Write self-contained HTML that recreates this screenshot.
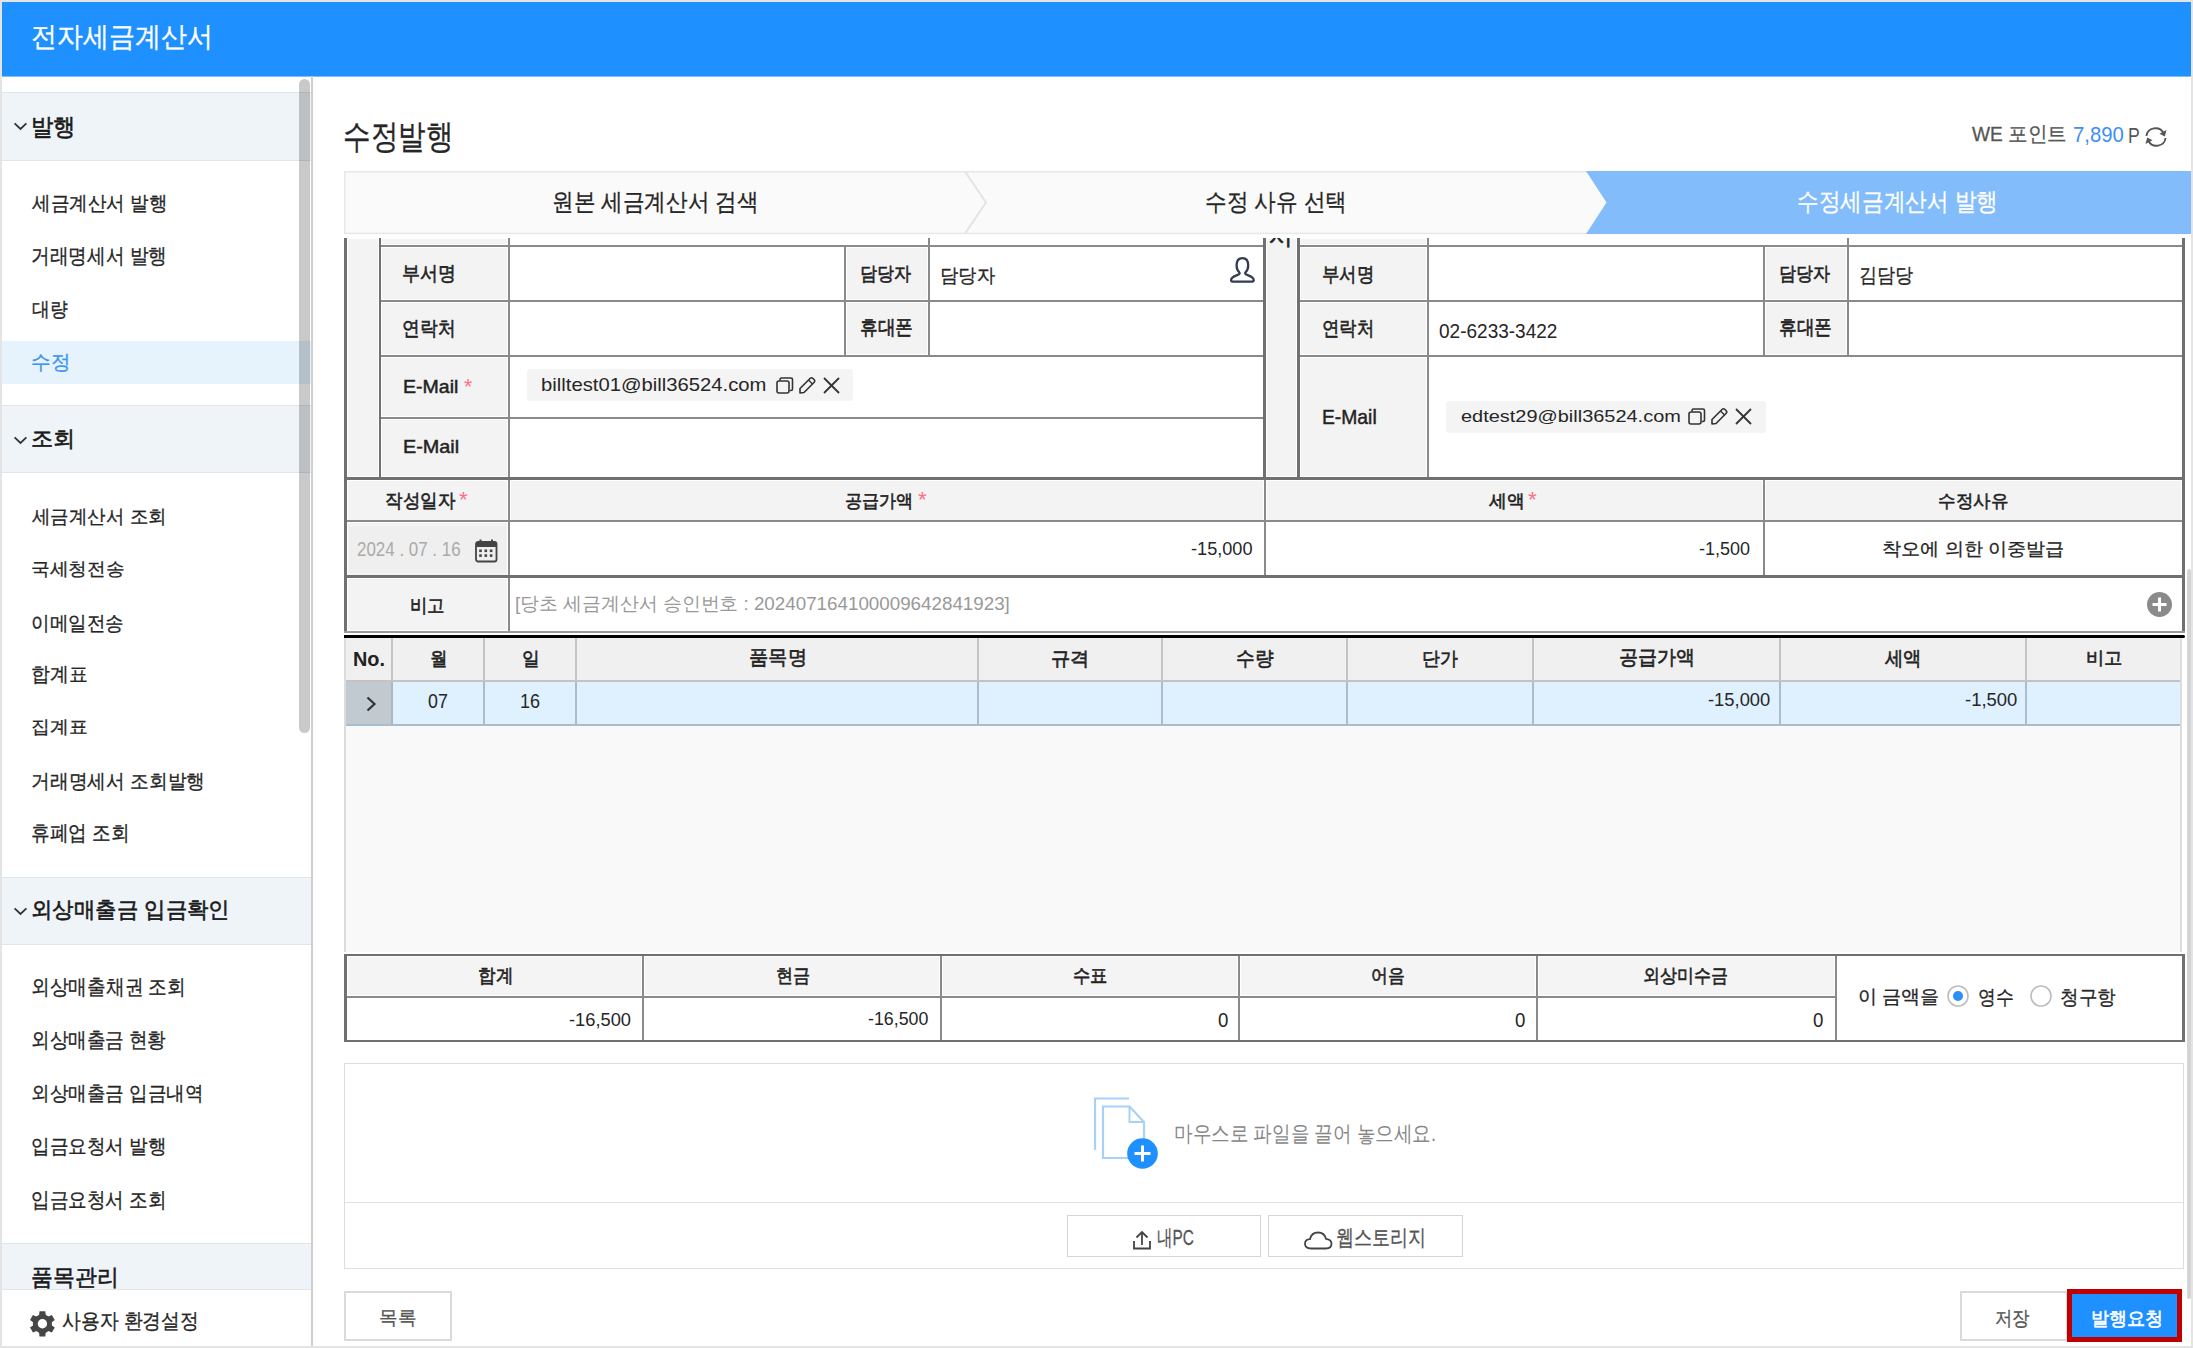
<!DOCTYPE html>
<html><head><meta charset="utf-8"><title>수정발행</title>
<style>
html,body{margin:0;padding:0;width:2193px;height:1348px;overflow:hidden;background:#fff}
body{position:relative;font-family:'Liberation Sans',sans-serif}
body>div,body>svg{position:absolute;display:block}
.t{white-space:pre;transform-origin:0 0}
</style></head><body>
<div style="left:0px;top:0px;width:2193px;height:1348px;background:#e4e4e4;"></div>
<div style="left:2px;top:2px;width:2189px;height:1344px;background:#ffffff;"></div>
<div style="left:2px;top:2px;width:2189px;height:74px;background:#1e90ff;"></div>
<div style="left:2px;top:76px;width:2189px;height:1px;background:#7dbdff;"></div>
<div style="left:2px;top:92px;width:309px;height:69px;background:#e1e5e9;"></div>
<div style="left:2px;top:93px;width:309px;height:67px;background:#eff4f8;"></div>
<div style="left:2px;top:405px;width:309px;height:68px;background:#e1e5e9;"></div>
<div style="left:2px;top:406px;width:309px;height:66px;background:#eff4f8;"></div>
<div style="left:2px;top:877px;width:309px;height:68px;background:#e1e5e9;"></div>
<div style="left:2px;top:878px;width:309px;height:66px;background:#eff4f8;"></div>
<div style="left:2px;top:1243px;width:309px;height:47px;background:#e1e5e9;"></div>
<div style="left:2px;top:1244px;width:309px;height:45px;background:#eff4f8;"></div>
<div style="left:2px;top:341px;width:309px;height:43px;background:#e6f3fd;"></div>
<div style="left:2px;top:1289px;width:309px;height:1px;background:#e4e4e4;"></div>
<div style="left:2px;top:1290px;width:309px;height:56px;background:#ffffff;"></div>
<div style="left:299px;top:79px;width:11px;height:654px;background:rgba(0,0,0,0.21);border-radius:6px"></div>
<div style="left:311px;top:76px;width:2px;height:1270px;background:#cfcfcf;"></div>
<svg style="left:343px;top:170px" width="1850" height="66" viewBox="343 170 1850 66"><rect x="344" y="171" width="1847" height="63" fill="#fafafa"/><rect x="344" y="171" width="1847" height="1.6" fill="#e8e8e8"/><rect x="344" y="232.6" width="1847" height="1.6" fill="#e8e8e8"/><rect x="344" y="171" width="1.5" height="63" fill="#e8e8e8"/><polyline points="965,171.5 986,202.5 965,233.5" fill="none" stroke="#e4e4e4" stroke-width="2"/><polygon points="1586,171 2191,171 2191,234 1586,234 1606.5,202.5" fill="#82bcfb"/></svg>
<div style="left:347px;top:238px;width:32px;height:239px;background:#ffffff;"></div>
<div style="left:348px;top:239px;width:30px;height:237px;background:#f3f3f3;"></div>
<div style="left:381px;top:238px;width:127px;height:7px;background:#ffffff;"></div>
<div style="left:382px;top:239px;width:125px;height:5px;background:#f3f3f3;"></div>
<div style="left:381px;top:247px;width:127px;height:53px;background:#ffffff;"></div>
<div style="left:382px;top:248px;width:125px;height:51px;background:#f3f3f3;"></div>
<div style="left:381px;top:302px;width:127px;height:53px;background:#ffffff;"></div>
<div style="left:382px;top:303px;width:125px;height:51px;background:#f3f3f3;"></div>
<div style="left:381px;top:357px;width:127px;height:60px;background:#ffffff;"></div>
<div style="left:382px;top:358px;width:125px;height:58px;background:#f3f3f3;"></div>
<div style="left:381px;top:419px;width:127px;height:58px;background:#ffffff;"></div>
<div style="left:382px;top:420px;width:125px;height:56px;background:#f3f3f3;"></div>
<div style="left:846px;top:247px;width:82px;height:53px;background:#ffffff;"></div>
<div style="left:847px;top:248px;width:80px;height:51px;background:#f3f3f3;"></div>
<div style="left:1765px;top:247px;width:82px;height:53px;background:#ffffff;"></div>
<div style="left:1766px;top:248px;width:80px;height:51px;background:#f3f3f3;"></div>
<div style="left:846px;top:302px;width:82px;height:53px;background:#ffffff;"></div>
<div style="left:847px;top:303px;width:80px;height:51px;background:#f3f3f3;"></div>
<div style="left:1765px;top:302px;width:82px;height:53px;background:#ffffff;"></div>
<div style="left:1766px;top:303px;width:80px;height:51px;background:#f3f3f3;"></div>
<div style="left:1266px;top:238px;width:31px;height:239px;background:#ffffff;"></div>
<div style="left:1267px;top:239px;width:29px;height:237px;background:#f3f3f3;"></div>
<div style="left:1300px;top:238px;width:127px;height:7px;background:#ffffff;"></div>
<div style="left:1301px;top:239px;width:125px;height:5px;background:#f3f3f3;"></div>
<div style="left:1300px;top:247px;width:127px;height:53px;background:#ffffff;"></div>
<div style="left:1301px;top:248px;width:125px;height:51px;background:#f3f3f3;"></div>
<div style="left:1300px;top:302px;width:127px;height:53px;background:#ffffff;"></div>
<div style="left:1301px;top:303px;width:125px;height:51px;background:#f3f3f3;"></div>
<div style="left:1300px;top:357px;width:127px;height:120px;background:#ffffff;"></div>
<div style="left:1301px;top:358px;width:125px;height:118px;background:#f3f3f3;"></div>
<div style="left:344px;top:238px;width:3px;height:242px;background:#707070;"></div>
<div style="left:379px;top:238px;width:2px;height:239px;background:#707070;"></div>
<div style="left:508px;top:238px;width:2px;height:239px;background:#8a8a8a;"></div>
<div style="left:381px;top:245px;width:882px;height:2px;background:#8a8a8a;"></div>
<div style="left:381px;top:300px;width:882px;height:2px;background:#8a8a8a;"></div>
<div style="left:381px;top:355px;width:882px;height:2px;background:#8a8a8a;"></div>
<div style="left:381px;top:417px;width:882px;height:2px;background:#8a8a8a;"></div>
<div style="left:844px;top:245px;width:2px;height:110px;background:#8a8a8a;"></div>
<div style="left:928px;top:238px;width:2px;height:117px;background:#8a8a8a;"></div>
<div style="left:1263px;top:238px;width:3px;height:239px;background:#707070;"></div>
<div style="left:1297px;top:238px;width:3px;height:239px;background:#707070;"></div>
<div style="left:1427px;top:238px;width:2px;height:239px;background:#8a8a8a;"></div>
<div style="left:1300px;top:245px;width:882px;height:2px;background:#8a8a8a;"></div>
<div style="left:1300px;top:300px;width:882px;height:2px;background:#8a8a8a;"></div>
<div style="left:1300px;top:355px;width:882px;height:2px;background:#8a8a8a;"></div>
<div style="left:1763px;top:245px;width:2px;height:110px;background:#8a8a8a;"></div>
<div style="left:1847px;top:238px;width:2px;height:117px;background:#8a8a8a;"></div>
<div style="left:2182px;top:238px;width:3px;height:242px;background:#707070;"></div>
<div style="left:344px;top:477px;width:1841px;height:3px;background:#707070;"></div>
<div style="left:347px;top:480px;width:161px;height:41px;background:#ffffff;"></div>
<div style="left:348px;top:481px;width:159px;height:39px;background:#f3f3f3;"></div>
<div style="left:510px;top:480px;width:754px;height:41px;background:#ffffff;"></div>
<div style="left:511px;top:481px;width:752px;height:39px;background:#f3f3f3;"></div>
<div style="left:1266px;top:480px;width:497px;height:41px;background:#ffffff;"></div>
<div style="left:1267px;top:481px;width:495px;height:39px;background:#f3f3f3;"></div>
<div style="left:1765px;top:480px;width:417px;height:41px;background:#ffffff;"></div>
<div style="left:1766px;top:481px;width:415px;height:39px;background:#f3f3f3;"></div>
<div style="left:347px;top:522px;width:161px;height:54px;background:#ffffff;"></div>
<div style="left:348px;top:523px;width:159px;height:52px;background:#f3f3f3;"></div>
<div style="left:349px;top:526px;width:157px;height:47px;background:#efefef;"></div>
<div style="left:347px;top:578px;width:161px;height:53px;background:#ffffff;"></div>
<div style="left:348px;top:579px;width:159px;height:51px;background:#f3f3f3;"></div>
<div style="left:344px;top:480px;width:3px;height:153px;background:#707070;"></div>
<div style="left:2182px;top:480px;width:3px;height:153px;background:#707070;"></div>
<div style="left:347px;top:520px;width:1835px;height:2px;background:#8a8a8a;"></div>
<div style="left:508px;top:480px;width:2px;height:96px;background:#8a8a8a;"></div>
<div style="left:1264px;top:480px;width:2px;height:96px;background:#8a8a8a;"></div>
<div style="left:1763px;top:480px;width:2px;height:96px;background:#8a8a8a;"></div>
<div style="left:344px;top:575px;width:1841px;height:3px;background:#707070;"></div>
<div style="left:508px;top:578px;width:2px;height:53px;background:#8a8a8a;"></div>
<div style="left:344px;top:631px;width:1841px;height:2px;background:#9a9a9a;"></div>
<div style="left:344px;top:635px;width:1841px;height:3px;background:#000000;border-radius:0 2px 2px 0"></div>
<div style="left:344px;top:638px;width:1838px;height:314px;background:#dcdcdc;"></div>
<div style="left:346px;top:638px;width:1834px;height:314px;background:#f9f9f9;"></div>
<div style="left:346px;top:638px;width:1834px;height:42px;background:#f0f0f0;"></div>
<div style="left:346px;top:680px;width:1834px;height:2px;background:#c3c3c3;"></div>
<div style="left:346px;top:682px;width:1834px;height:42px;background:#dff0fe;"></div>
<div style="left:346px;top:682px;width:45px;height:42px;background:#c1c9d1;"></div>
<div style="left:346px;top:724px;width:1834px;height:2px;background:#aabdcd;"></div>
<div style="left:391px;top:638px;width:2px;height:42px;background:#c4c4c4;"></div>
<div style="left:391px;top:682px;width:2px;height:42px;background:#b0b6bc;"></div>
<div style="left:483px;top:638px;width:2px;height:42px;background:#c4c4c4;"></div>
<div style="left:483px;top:682px;width:2px;height:42px;background:#aabdcd;"></div>
<div style="left:575px;top:638px;width:2px;height:42px;background:#c4c4c4;"></div>
<div style="left:575px;top:682px;width:2px;height:42px;background:#aabdcd;"></div>
<div style="left:977px;top:638px;width:2px;height:42px;background:#c4c4c4;"></div>
<div style="left:977px;top:682px;width:2px;height:42px;background:#aabdcd;"></div>
<div style="left:1161px;top:638px;width:2px;height:42px;background:#c4c4c4;"></div>
<div style="left:1161px;top:682px;width:2px;height:42px;background:#aabdcd;"></div>
<div style="left:1346px;top:638px;width:2px;height:42px;background:#c4c4c4;"></div>
<div style="left:1346px;top:682px;width:2px;height:42px;background:#aabdcd;"></div>
<div style="left:1532px;top:638px;width:2px;height:42px;background:#c4c4c4;"></div>
<div style="left:1532px;top:682px;width:2px;height:42px;background:#aabdcd;"></div>
<div style="left:1779px;top:638px;width:2px;height:42px;background:#c4c4c4;"></div>
<div style="left:1779px;top:682px;width:2px;height:42px;background:#aabdcd;"></div>
<div style="left:2025px;top:638px;width:2px;height:42px;background:#c4c4c4;"></div>
<div style="left:2025px;top:682px;width:2px;height:42px;background:#aabdcd;"></div>
<div style="left:344px;top:954px;width:1841px;height:88px;background:#707070;"></div>
<div style="left:347px;top:956px;width:1835px;height:84px;background:#ffffff;"></div>
<div style="left:347px;top:956px;width:295px;height:40px;background:#ffffff;"></div>
<div style="left:348px;top:957px;width:293px;height:38px;background:#f4f4f4;"></div>
<div style="left:644px;top:956px;width:296px;height:40px;background:#ffffff;"></div>
<div style="left:645px;top:957px;width:294px;height:38px;background:#f4f4f4;"></div>
<div style="left:942px;top:956px;width:296px;height:40px;background:#ffffff;"></div>
<div style="left:943px;top:957px;width:294px;height:38px;background:#f4f4f4;"></div>
<div style="left:1240px;top:956px;width:296px;height:40px;background:#ffffff;"></div>
<div style="left:1241px;top:957px;width:294px;height:38px;background:#f4f4f4;"></div>
<div style="left:1538px;top:956px;width:297px;height:40px;background:#ffffff;"></div>
<div style="left:1539px;top:957px;width:295px;height:38px;background:#f4f4f4;"></div>
<div style="left:347px;top:996px;width:1488px;height:2px;background:#8a8a8a;"></div>
<div style="left:642px;top:956px;width:2px;height:84px;background:#8a8a8a;"></div>
<div style="left:940px;top:956px;width:2px;height:84px;background:#8a8a8a;"></div>
<div style="left:1238px;top:956px;width:2px;height:84px;background:#8a8a8a;"></div>
<div style="left:1536px;top:956px;width:2px;height:84px;background:#8a8a8a;"></div>
<div style="left:1835px;top:956px;width:2px;height:84px;background:#8a8a8a;"></div>
<div style="left:344px;top:1063px;width:1840px;height:206px;background:#dddddd;"></div>
<div style="left:345px;top:1064px;width:1838px;height:204px;background:#ffffff;"></div>
<div style="left:345px;top:1202px;width:1838px;height:1px;background:#e2e2e2;"></div>
<div style="left:1067px;top:1215px;width:194px;height:42px;background:#d6d6d6;"></div>
<div style="left:1068px;top:1216px;width:192px;height:40px;background:#ffffff;"></div>
<div style="left:1268px;top:1215px;width:195px;height:42px;background:#d6d6d6;"></div>
<div style="left:1269px;top:1216px;width:193px;height:40px;background:#ffffff;"></div>
<div style="left:344px;top:1291px;width:108px;height:50px;background:#dadada;"></div>
<div style="left:346px;top:1293px;width:104px;height:46px;background:#ffffff;"></div>
<div style="left:1960px;top:1291px;width:108px;height:50px;background:#dadada;"></div>
<div style="left:1962px;top:1293px;width:104px;height:46px;background:#ffffff;"></div>
<div style="left:2067px;top:1289px;width:115px;height:53px;background:#c00000;"></div>
<div style="left:2072px;top:1294px;width:105px;height:43px;background:#1e90ff;"></div>
<div style="left:2187px;top:569px;width:4px;height:730px;background:#d4d4d4;border-radius:2px"></div>
<div style="left:527px;top:369px;width:326px;height:32px;background:#f4f4f4;border-radius:3px"></div>
<div style="left:1446px;top:401px;width:320px;height:32px;background:#f4f4f4;border-radius:3px"></div>
<svg style="left:12px;top:119px" width="18" height="14" viewBox="0 0 18 14"><polyline points="2.6,4.3 8.5,10 14.4,4.3" fill="none" stroke="#333" stroke-width="1.8"/></svg>
<svg style="left:12px;top:433px" width="18" height="14" viewBox="0 0 18 14"><polyline points="2.6,4.3 8.5,10 14.4,4.3" fill="none" stroke="#333" stroke-width="1.8"/></svg>
<svg style="left:12px;top:904px" width="18" height="14" viewBox="0 0 18 14"><polyline points="2.6,4.3 8.5,10 14.4,4.3" fill="none" stroke="#333" stroke-width="1.8"/></svg>
<svg style="left:29px;top:1310px" width="27" height="28" viewBox="0 0 27 28"><g transform="translate(13.4,13.8)" fill="#464646"><path d="M-2.9,-12.6 L2.9,-12.6 L3.6,-6 L-3.6,-6 Z" transform="rotate(0)"/><path d="M-2.9,-12.6 L2.9,-12.6 L3.6,-6 L-3.6,-6 Z" transform="rotate(60)"/><path d="M-2.9,-12.6 L2.9,-12.6 L3.6,-6 L-3.6,-6 Z" transform="rotate(120)"/><path d="M-2.9,-12.6 L2.9,-12.6 L3.6,-6 L-3.6,-6 Z" transform="rotate(180)"/><path d="M-2.9,-12.6 L2.9,-12.6 L3.6,-6 L-3.6,-6 Z" transform="rotate(240)"/><path d="M-2.9,-12.6 L2.9,-12.6 L3.6,-6 L-3.6,-6 Z" transform="rotate(300)"/><circle r="9.6"/></g><circle cx="13.4" cy="13.8" r="4.7" fill="#fff"/></svg>
<svg style="left:2142px;top:125px" width="28" height="24" viewBox="0 0 28 24"><path d="M4.5,11 A9,8.5 0 0 1 21.5,8" fill="none" stroke="#555" stroke-width="1.8"/><path d="M23.5,13 A9,8.5 0 0 1 6.5,16" fill="none" stroke="#555" stroke-width="1.8"/><polygon points="24.5,5 22.8,11.5 17.5,8.8" fill="#555"/><polygon points="3.5,19 5.2,12.5 10.5,15.2" fill="#555"/></svg>
<svg style="left:1228px;top:255px" width="29" height="30" viewBox="0 0 29 30"><path d="M14.4,3.2 C10.2,3.2 8.6,6.6 8.6,10.5 C8.6,13.5 9.8,15.8 11.2,17.2 Q12.2,18.3 11,19.2 L5.2,21.9 Q3.1,23 3.1,25 L3.1,25.3 Q3.1,26.6 4.6,26.6 L24.2,26.6 Q25.7,26.6 25.7,25.3 L25.7,25 Q25.7,23 23.6,21.9 L17.8,19.2 Q16.6,18.3 17.6,17.2 C19,15.8 20.2,13.5 20.2,10.5 C20.2,6.6 18.6,3.2 14.4,3.2 Z" fill="none" stroke="#353b50" stroke-width="2.3" stroke-linejoin="round"/></svg>
<svg style="left:775px;top:376px" width="20" height="19" viewBox="0 0 20 19"><rect x="2" y="5" width="12" height="12" rx="2" fill="none" stroke="#333" stroke-width="1.6"/><path d="M5,4.5 L5,3.5 Q5,2 6.5,2 L16,2 Q17.5,2 17.5,3.5 L17.5,13 Q17.5,14.5 16,14.5 L15,14.5" fill="none" stroke="#333" stroke-width="1.6"/></svg>
<svg style="left:797px;top:376px" width="20" height="19" viewBox="0 0 20 19"><path d="M3,17 L3,12.5 L13,2.5 Q14.5,1 16,2.5 L17,3.5 Q18.5,5 17,6.5 L7,16.5 Z" fill="none" stroke="#333" stroke-width="1.6" stroke-linejoin="round"/><line x1="11.5" y1="4" x2="15.5" y2="8" stroke="#333" stroke-width="1.5"/></svg>
<svg style="left:822px;top:376px" width="19" height="19" viewBox="0 0 19 19"><line x1="2" y1="2" x2="17" y2="17" stroke="#333" stroke-width="1.8"/><line x1="17" y1="2" x2="2" y2="17" stroke="#333" stroke-width="1.8"/></svg>
<svg style="left:1687px;top:407px" width="20" height="19" viewBox="0 0 20 19"><rect x="2" y="5" width="12" height="12" rx="2" fill="none" stroke="#333" stroke-width="1.6"/><path d="M5,4.5 L5,3.5 Q5,2 6.5,2 L16,2 Q17.5,2 17.5,3.5 L17.5,13 Q17.5,14.5 16,14.5 L15,14.5" fill="none" stroke="#333" stroke-width="1.6"/></svg>
<svg style="left:1709px;top:407px" width="20" height="19" viewBox="0 0 20 19"><path d="M3,17 L3,12.5 L13,2.5 Q14.5,1 16,2.5 L17,3.5 Q18.5,5 17,6.5 L7,16.5 Z" fill="none" stroke="#333" stroke-width="1.6" stroke-linejoin="round"/><line x1="11.5" y1="4" x2="15.5" y2="8" stroke="#333" stroke-width="1.5"/></svg>
<svg style="left:1734px;top:407px" width="19" height="19" viewBox="0 0 19 19"><line x1="2" y1="2" x2="17" y2="17" stroke="#333" stroke-width="1.8"/><line x1="17" y1="2" x2="2" y2="17" stroke="#333" stroke-width="1.8"/></svg>
<svg style="left:474px;top:538px" width="25" height="25" viewBox="0 0 25 25"><rect x="2" y="4" width="20.5" height="19.5" rx="2" fill="none" stroke="#444" stroke-width="1.8"/><rect x="2" y="4" width="20.5" height="5" fill="#444"/><rect x="5.5" y="1.5" width="2" height="4" fill="#444"/><rect x="17" y="1.5" width="2" height="4" fill="#444"/><rect x="5.2" y="11.5" width="2.6" height="2.6" fill="#444"/><rect x="5.2" y="16.3" width="2.6" height="2.6" fill="#444"/><rect x="10.5" y="11.5" width="2.6" height="2.6" fill="#444"/><rect x="10.5" y="16.3" width="2.6" height="2.6" fill="#444"/><rect x="15.8" y="11.5" width="2.6" height="2.6" fill="#444"/><rect x="15.8" y="16.3" width="2.6" height="2.6" fill="#444"/></svg>
<svg style="left:2146px;top:591px" width="27" height="27" viewBox="0 0 27 27"><circle cx="13.5" cy="13.5" r="12.5" fill="#8a8a8a"/><rect x="12" y="6.5" width="3" height="14" fill="#fff"/><rect x="6.5" y="12" width="14" height="3" fill="#fff"/></svg>
<svg style="left:363px;top:695px" width="16" height="18" viewBox="0 0 16 18"><polyline points="4.5,2.5 11.5,9 4.5,15.5" fill="none" stroke="#333" stroke-width="2.2"/></svg>
<svg style="left:1946px;top:984px" width="24" height="24" viewBox="0 0 24 24"><circle cx="12" cy="12" r="10" fill="#fff" stroke="#bdbdbd" stroke-width="1.6"/><circle cx="12" cy="12" r="5" fill="#2d8ff5"/></svg>
<svg style="left:2029px;top:984px" width="24" height="24" viewBox="0 0 24 24"><circle cx="12" cy="12" r="10" fill="#fff" stroke="#bdbdbd" stroke-width="1.6"/></svg>
<svg style="left:1090px;top:1094px" width="72" height="80" viewBox="0 0 72 80"><polyline points="5,56 5,4.5 39,4.5" fill="none" stroke="#a9d1f7" stroke-width="2.2"/><path d="M13,12.5 L39.5,12.5 L54,28 L54,64 L13,64 Z" fill="#fff" stroke="#a9d1f7" stroke-width="2.2"/><polyline points="39.5,12.5 39.5,28 54,28" fill="none" stroke="#a9d1f7" stroke-width="2"/><circle cx="52.5" cy="59.5" r="15.3" fill="#1e90ff"/><rect x="51" y="51.5" width="3" height="16" fill="#fff"/><rect x="44.5" y="58" width="16" height="3" fill="#fff"/></svg>
<svg style="left:1131px;top:1229px" width="22" height="22" viewBox="0 0 22 22"><polyline points="3,12 3,19.5 19,19.5 19,12" fill="none" stroke="#444" stroke-width="1.8"/><line x1="11" y1="3" x2="11" y2="16" stroke="#444" stroke-width="1.8"/><polyline points="5.5,8.5 11,3 16.5,8.5" fill="none" stroke="#444" stroke-width="1.8"/></svg>
<svg style="left:1302px;top:1229px" width="32" height="22" viewBox="0 0 32 22"><path d="M9,19.5 Q3,19.5 3,14.8 Q3,10.5 8,10.2 Q9.5,3.5 16,3.5 Q22.5,3.5 24,9.8 Q29.5,10.5 29.5,14.8 Q29.5,19.5 24,19.5 Z" fill="none" stroke="#444" stroke-width="1.8"/></svg>
<div class="t" style="left:31.0px;top:16.7px;font-size:27.78px;line-height:39px;color:#ffffff;-webkit-text-stroke:0.3px #ffffff;transform:scaleX(0.9274)">전자세금계산서</div>
<div class="t" style="left:31.16px;top:110.18px;font-size:23.89px;line-height:33px;color:#1a1a1a;-webkit-text-stroke:0.6px #1a1a1a;transform:scaleX(0.9326)">발행</div>
<div class="t" style="left:31.76px;top:189.22px;font-size:20.33px;line-height:28px;color:#262626;-webkit-text-stroke:0.3px #262626;transform:scaleX(0.9273)">세금계산서 발행</div>
<div class="t" style="left:30.76px;top:241.28px;font-size:21.22px;line-height:30px;color:#262626;-webkit-text-stroke:0.3px #262626;transform:scaleX(0.8896)">거래명세서 발행</div>
<div class="t" style="left:32.0px;top:294.34px;font-size:20.44px;line-height:29px;color:#262626;-webkit-text-stroke:0.3px #262626;transform:scaleX(0.89)">대량</div>
<div class="t" style="left:31.0px;top:346.72px;font-size:20.44px;line-height:29px;color:#3d95f0;-webkit-text-stroke:0.3px #3d95f0;transform:scaleX(0.9805)">수정</div>
<div class="t" style="left:31.0px;top:423.2px;font-size:22.22px;line-height:31px;color:#1a1a1a;-webkit-text-stroke:0.6px #1a1a1a;transform:scaleX(1.0076)">조회</div>
<div class="t" style="left:32.0px;top:502.68px;font-size:19.22px;line-height:27px;color:#262626;-webkit-text-stroke:0.3px #262626;transform:scaleX(0.9728)">세금계산서 조회</div>
<div class="t" style="left:31.0px;top:557.22px;font-size:18.11px;line-height:25px;color:#262626;-webkit-text-stroke:0.3px #262626;transform:scaleX(1.0391)">국세청전송</div>
<div class="t" style="left:30.6px;top:608.68px;font-size:19.78px;line-height:28px;color:#262626;-webkit-text-stroke:0.3px #262626;transform:scaleX(0.9279)">이메일전송</div>
<div class="t" style="left:30.92px;top:660.2px;font-size:19.73px;line-height:28px;color:#262626;-webkit-text-stroke:0.3px #262626;transform:scaleX(0.9432)">합계표</div>
<div class="t" style="left:30.92px;top:715.22px;font-size:18.11px;line-height:25px;color:#262626;-webkit-text-stroke:0.3px #262626;transform:scaleX(1.0452)">집계표</div>
<div class="t" style="left:31.0px;top:767.2px;font-size:20.0px;line-height:28px;color:#262626;-webkit-text-stroke:0.3px #262626;transform:scaleX(0.9379)">거래명세서 조회발행</div>
<div class="t" style="left:31.0px;top:818.44px;font-size:20.67px;line-height:29px;color:#262626;-webkit-text-stroke:0.3px #262626;transform:scaleX(0.8896)">휴폐업 조회</div>
<div class="t" style="left:30.6px;top:894.36px;font-size:21.97px;line-height:31px;color:#1a1a1a;-webkit-text-stroke:0.6px #1a1a1a;transform:scaleX(0.974)">외상매출금 입금확인</div>
<div class="t" style="left:31.0px;top:972.32px;font-size:20.54px;line-height:29px;color:#262626;-webkit-text-stroke:0.3px #262626;transform:scaleX(0.8914)">외상매출채권 조회</div>
<div class="t" style="left:31.0px;top:1025.32px;font-size:20.54px;line-height:29px;color:#262626;-webkit-text-stroke:0.3px #262626;transform:scaleX(0.8844)">외상매출금 현황</div>
<div class="t" style="left:31.0px;top:1079.2px;font-size:20.27px;line-height:28px;color:#262626;-webkit-text-stroke:0.3px #262626;transform:scaleX(0.9282)">외상매출금 입금내역</div>
<div class="t" style="left:31.0px;top:1132.44px;font-size:20.38px;line-height:29px;color:#262626;-webkit-text-stroke:0.3px #262626;transform:scaleX(0.9309)">입금요청서 발행</div>
<div class="t" style="left:31.0px;top:1185.2px;font-size:20.82px;line-height:29px;color:#262626;-webkit-text-stroke:0.3px #262626;transform:scaleX(0.8859)">입금요청서 조회</div>
<div class="t" style="left:31.0px;top:1260.7px;font-size:23.34px;line-height:33px;color:#1a1a1a;-webkit-text-stroke:0.6px #1a1a1a;transform:scaleX(0.9502);height:28.299999999999955px;overflow:hidden">품목관리</div>
<div class="t" style="left:62.0px;top:1306.2px;font-size:21.11px;line-height:30px;color:#262626;-webkit-text-stroke:0.3px #262626;transform:scaleX(0.8956)">사용자 환경설정</div>
<div class="t" style="left:343.0px;top:112.0px;font-size:34.44px;line-height:48px;color:#262626;-webkit-text-stroke:0.3px #262626;transform:scaleX(0.8098)">수정발행</div>
<div class="t" style="left:1972.0px;top:119.2px;font-size:20.57px;line-height:29px;color:#555555;-webkit-text-stroke:0.3px #555555;transform:scaleX(0.9297)">WE 포인트</div>
<div class="t" style="left:2073.0px;top:119.0px;font-size:21.82px;line-height:31px;color:#3d8ef8;transform:scaleX(0.9313)">7,890</div>
<div class="t" style="left:2127.76px;top:119.64px;font-size:22.0px;line-height:31px;color:#555555;transform:scaleX(0.8051)">P</div>
<div class="t" style="left:552.36px;top:185.7px;font-size:23.56px;line-height:33px;color:#262626;-webkit-text-stroke:0.3px #262626;transform:scaleX(0.9001)">원본 세금계산서 검색</div>
<div class="t" style="left:1205.32px;top:184.7px;font-size:23.89px;line-height:33px;color:#262626;-webkit-text-stroke:0.3px #262626;transform:scaleX(0.9015)">수정 사유 선택</div>
<div class="t" style="left:1796.88px;top:184.0px;font-size:25.0px;line-height:35px;color:#ffffff;-webkit-text-stroke:0.3px #ffffff;transform:scaleX(0.8659)">수정세금계산서 발행</div>
<div class="t" style="left:402.0px;top:260.42px;font-size:19.51px;line-height:27px;color:#222222;-webkit-text-stroke:0.6px #222222;transform:scaleX(0.8985)">부서명</div>
<div class="t" style="left:402.0px;top:314.2px;font-size:20.0px;line-height:28px;color:#222222;-webkit-text-stroke:0.6px #222222;transform:scaleX(0.8883)">연락처</div>
<div class="t" style="left:402.6px;top:374.54px;font-size:17.87px;line-height:25px;color:#222222;-webkit-text-stroke:0.45px #222222;transform:scaleX(1.0937)">E-Mail</div>
<div class="t" style="left:463.5px;top:370.0px;font-size:22.86px;line-height:32px;color:#ff7088;transform:scaleX(0.9213)">*</div>
<div class="t" style="left:403.0px;top:434.2px;font-size:18.67px;line-height:26px;color:#222222;-webkit-text-stroke:0.45px #222222;transform:scaleX(1.0622)">E-Mail</div>
<div class="t" style="left:860.0px;top:260.36px;font-size:19.03px;line-height:27px;color:#222222;-webkit-text-stroke:0.6px #222222;transform:scaleX(0.8975)">담당자</div>
<div class="t" style="left:860.0px;top:313.2px;font-size:20.0px;line-height:28px;color:#222222;-webkit-text-stroke:0.6px #222222;transform:scaleX(0.887)">휴대폰</div>
<div class="t" style="left:940.4px;top:262.0px;font-size:19.18px;line-height:27px;color:#262626;-webkit-text-stroke:0.3px #262626;transform:scaleX(0.9625)">담당자</div>
<div class="t" style="left:541.0px;top:370.96px;font-size:19.25px;line-height:27px;color:#262626;transform:scaleX(1.0521)">billtest01@bill36524.com</div>
<div class="t" style="left:1269.0px;top:220.0px;font-size:23.01px;line-height:32px;color:#222222;-webkit-text-stroke:0.6px #222222;transform:scaleX(1.0346);clip-path:inset(18.0px 0 0 0)">서</div>
<div class="t" style="left:1321.62px;top:260.8px;font-size:19.51px;line-height:27px;color:#222222;-webkit-text-stroke:0.6px #222222;transform:scaleX(0.8725)">부서명</div>
<div class="t" style="left:1322.0px;top:314.2px;font-size:20.0px;line-height:28px;color:#222222;-webkit-text-stroke:0.6px #222222;transform:scaleX(0.8702)">연락처</div>
<div class="t" style="left:1321.62px;top:402.76px;font-size:20.4px;line-height:29px;color:#222222;-webkit-text-stroke:0.45px #222222;transform:scaleX(0.9461)">E-Mail</div>
<div class="t" style="left:1779.0px;top:260.36px;font-size:19.03px;line-height:27px;color:#222222;-webkit-text-stroke:0.6px #222222;transform:scaleX(0.8975)">담당자</div>
<div class="t" style="left:1779.0px;top:313.2px;font-size:20.0px;line-height:28px;color:#222222;-webkit-text-stroke:0.6px #222222;transform:scaleX(0.887)">휴대폰</div>
<div class="t" style="left:1859.0px;top:261.88px;font-size:19.51px;line-height:27px;color:#262626;-webkit-text-stroke:0.3px #262626;transform:scaleX(0.9032)">김담당</div>
<div class="t" style="left:1438.88px;top:315.8px;font-size:21.05px;line-height:29px;color:#262626;transform:scaleX(0.9035)">02-6233-3422</div>
<div class="t" style="left:1461.0px;top:404.76px;font-size:16.7px;line-height:23px;color:#262626;transform:scaleX(1.1952)">edtest29@bill36524.com</div>
<div class="t" style="left:385.48px;top:487.22px;font-size:18.96px;line-height:27px;color:#222222;-webkit-text-stroke:0.6px #222222;transform:scaleX(0.9221)">작성일자</div>
<div class="t" style="left:459.0px;top:483.0px;font-size:22.86px;line-height:32px;color:#ff7088;transform:scaleX(0.9776)">*</div>
<div class="t" style="left:845.0px;top:487.52px;font-size:18.3px;line-height:26px;color:#222222;-webkit-text-stroke:0.6px #222222;transform:scaleX(0.949)">공급가액</div>
<div class="t" style="left:918.0px;top:483.0px;font-size:22.86px;line-height:32px;color:#ff7088;transform:scaleX(0.9776)">*</div>
<div class="t" style="left:1489.0px;top:488.52px;font-size:18.05px;line-height:25px;color:#222222;-webkit-text-stroke:0.6px #222222;transform:scaleX(0.9889)">세액</div>
<div class="t" style="left:1528.16px;top:483.0px;font-size:22.86px;line-height:32px;color:#ff7088;transform:scaleX(0.9905)">*</div>
<div class="t" style="left:1937.76px;top:488.86px;font-size:17.89px;line-height:25px;color:#222222;-webkit-text-stroke:0.6px #222222;transform:scaleX(0.9725)">수정사유</div>
<div class="t" style="left:356.62px;top:534.48px;font-size:20.77px;line-height:29px;color:#aaaaaa;transform:scaleX(0.8157)">2024 . 07 . 16</div>
<div class="t" style="left:1190.62px;top:537.48px;font-size:17.82px;line-height:25px;color:#262626;transform:scaleX(1.0184)">-15,000</div>
<div class="t" style="left:1699.28px;top:537.48px;font-size:17.82px;line-height:25px;color:#262626;transform:scaleX(1.0093)">-1,500</div>
<div class="t" style="left:1881.88px;top:537.48px;font-size:18.0px;line-height:25px;color:#262626;-webkit-text-stroke:0.3px #262626;transform:scaleX(1.0604)">착오에 의한 이중발급</div>
<div class="t" style="left:409.88px;top:593.02px;font-size:18.56px;line-height:26px;color:#222222;-webkit-text-stroke:0.6px #222222;transform:scaleX(0.9188)">비고</div>
<div class="t" style="left:514.76px;top:591.48px;font-size:18.91px;line-height:26px;color:#999999;transform:scaleX(0.9934)">[당초 세금계산서 승인번호 : 202407164100009642841923]</div>
<div class="t" style="left:353.0px;top:646.02px;font-size:19.57px;line-height:27px;color:#222222;font-weight:bold;transform:scaleX(1.0146)">No.</div>
<div class="t" style="left:429.62px;top:645.2px;font-size:19.15px;line-height:27px;color:#222222;-webkit-text-stroke:0.6px #222222;transform:scaleX(0.9238)">월</div>
<div class="t" style="left:522.0px;top:645.2px;font-size:19.15px;line-height:27px;color:#222222;-webkit-text-stroke:0.6px #222222;transform:scaleX(0.9322)">일</div>
<div class="t" style="left:749.0px;top:643.36px;font-size:20.38px;line-height:29px;color:#222222;-webkit-text-stroke:0.6px #222222;transform:scaleX(0.9646)">품목명</div>
<div class="t" style="left:1051.36px;top:646.2px;font-size:18.63px;line-height:26px;color:#222222;-webkit-text-stroke:0.6px #222222;transform:scaleX(1.014)">규격</div>
<div class="t" style="left:1236.0px;top:645.36px;font-size:19.56px;line-height:27px;color:#222222;-webkit-text-stroke:0.6px #222222;transform:scaleX(0.9325)">수량</div>
<div class="t" style="left:1421.62px;top:646.2px;font-size:18.63px;line-height:26px;color:#222222;-webkit-text-stroke:0.6px #222222;transform:scaleX(0.9437)">단가</div>
<div class="t" style="left:1619.32px;top:643.36px;font-size:20.38px;line-height:29px;color:#222222;-webkit-text-stroke:0.6px #222222;transform:scaleX(0.9524)">공급가액</div>
<div class="t" style="left:1885.48px;top:644.36px;font-size:20.11px;line-height:28px;color:#222222;-webkit-text-stroke:0.6px #222222;transform:scaleX(0.9213)">세액</div>
<div class="t" style="left:2086.0px;top:646.22px;font-size:18.11px;line-height:25px;color:#222222;-webkit-text-stroke:0.6px #222222;transform:scaleX(1.0156)">비고</div>
<div class="t" style="left:427.7px;top:687.32px;font-size:19.93px;line-height:28px;color:#262626;transform:scaleX(0.8933)">07</div>
<div class="t" style="left:520.08px;top:687.32px;font-size:19.93px;line-height:28px;color:#262626;transform:scaleX(0.9056)">16</div>
<div class="t" style="left:1708.4px;top:688.2px;font-size:18.18px;line-height:25px;color:#262626;transform:scaleX(1.0101)">-15,000</div>
<div class="t" style="left:1965.38px;top:688.2px;font-size:18.18px;line-height:25px;color:#262626;transform:scaleX(1.0152)">-1,500</div>
<div class="t" style="left:477.64px;top:962.68px;font-size:18.59px;line-height:26px;color:#222222;-webkit-text-stroke:0.6px #222222;transform:scaleX(0.9233)">합계</div>
<div class="t" style="left:775.5px;top:962.68px;font-size:18.85px;line-height:26px;color:#222222;-webkit-text-stroke:0.6px #222222;transform:scaleX(0.8991)">현금</div>
<div class="t" style="left:1073.0px;top:962.96px;font-size:18.74px;line-height:26px;color:#222222;-webkit-text-stroke:0.6px #222222;transform:scaleX(0.9114)">수표</div>
<div class="t" style="left:1370.62px;top:962.68px;font-size:18.85px;line-height:26px;color:#222222;-webkit-text-stroke:0.6px #222222;transform:scaleX(0.8861)">어음</div>
<div class="t" style="left:1643.34px;top:963.48px;font-size:18.59px;line-height:26px;color:#222222;-webkit-text-stroke:0.6px #222222;transform:scaleX(0.8924)">외상미수금</div>
<div class="t" style="left:569.0px;top:1007.52px;font-size:17.82px;line-height:25px;color:#262626;transform:scaleX(1.026)">-16,500</div>
<div class="t" style="left:867.84px;top:1007.12px;font-size:17.82px;line-height:25px;color:#262626;transform:scaleX(0.9983)">-16,500</div>
<div class="t" style="left:1217.5px;top:1005.32px;font-size:20.63px;line-height:29px;color:#262626;transform:scaleX(0.9038)">0</div>
<div class="t" style="left:1515.0px;top:1005.32px;font-size:20.63px;line-height:29px;color:#262626;transform:scaleX(0.9038)">0</div>
<div class="t" style="left:1812.54px;top:1005.32px;font-size:20.63px;line-height:29px;color:#262626;transform:scaleX(0.9038)">0</div>
<div class="t" style="left:1857.66px;top:984.2px;font-size:18.63px;line-height:26px;color:#262626;-webkit-text-stroke:0.3px #262626;transform:scaleX(1.0012)">이 금액을</div>
<div class="t" style="left:1978.0px;top:983.0px;font-size:20.0px;line-height:28px;color:#262626;-webkit-text-stroke:0.3px #262626;transform:scaleX(0.8926)">영수</div>
<div class="t" style="left:2060.0px;top:983.2px;font-size:20.0px;line-height:28px;color:#262626;-webkit-text-stroke:0.3px #262626;transform:scaleX(0.9314)">청구항</div>
<div class="t" style="left:1173.9px;top:1118.52px;font-size:21.59px;line-height:30px;color:#888888;transform:scaleX(0.8455)">마우스로 파일을 끌어 놓으세요.</div>
<div class="t" style="left:1157.0px;top:1223.36px;font-size:21.78px;line-height:30px;color:#555555;-webkit-text-stroke:0.3px #555555;transform:scaleX(0.7046)">내PC</div>
<div class="t" style="left:1336.0px;top:1223.36px;font-size:21.78px;line-height:30px;color:#555555;-webkit-text-stroke:0.3px #555555;transform:scaleX(0.8208)">웹스토리지</div>
<div class="t" style="left:379.44px;top:1305.0px;font-size:18.89px;line-height:26px;color:#555555;-webkit-text-stroke:0.3px #555555;transform:scaleX(0.9743)">목록</div>
<div class="t" style="left:1995.1px;top:1303.96px;font-size:19.89px;line-height:28px;color:#555555;-webkit-text-stroke:0.3px #555555;transform:scaleX(0.8672)">저장</div>
<div class="t" style="left:2091.02px;top:1305.0px;font-size:19.18px;line-height:27px;color:#ffffff;-webkit-text-stroke:0.6px #ffffff;transform:scaleX(0.9536)">발행요청</div>
</body></html>
